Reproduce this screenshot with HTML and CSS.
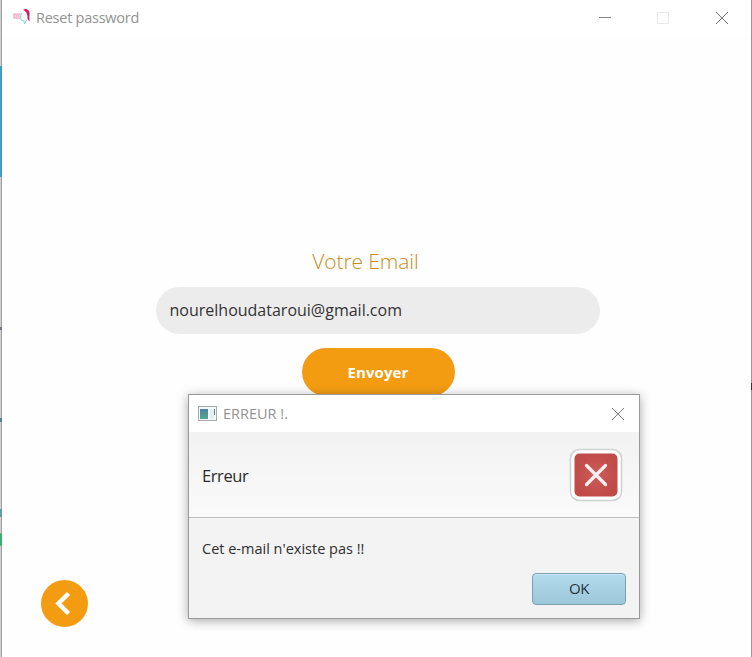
FILE: index.html
```html
<!DOCTYPE html>
<html lang="fr">
<head>
<meta charset="utf-8">
<title>Reset password</title>
<link rel="stylesheet" href="styles.css">
</head>
<body>
<div class="desktop">
  <main class="window">
    <header class="titlebar">
      <svg class="app-icon" width="20" height="20" viewBox="0 0 20 20" fill="none">
        <path d="M1 7.500h7.500M1 10.500h7.500" stroke="#f7bccb" stroke-width="2.500"/>
        <path d="M2 9h6" stroke="#ec92a9" stroke-width=".7" stroke-dasharray="1 1"/>
        <path d="M10 5c2-1.500 5 0 5 3s-1 5-3 7c-1-2-3-2-3-4s0-5 1-6z" fill="#f8fcfd"/>
        <path d="M9.500 6c-1 3-1 5-.5 7l3 1 .5 3 1.500-3c1-1 1.500-2 1.500-4" stroke="#8bcfe2" stroke-width="1"/>
        <path d="M11 3c2-2 6-1 6.500 2.500.2 3-.5 5 .2 9-1.500-1-2.200-3-2.200-5C15 6 14 4 11 3z" fill="#d2205c"/>
      </svg>
      <span class="title">Reset password</span>
      <svg class="controls" width="132" height="20" viewBox="0 0 132 20" fill="none">
        <path d="M1 9.500h12" stroke="#858585"/>
        <rect x="59.500" y="4.500" width="11" height="11" stroke="#e9e9e9"/>
        <path d="M118 4l12 12M130 4l-12 12" stroke="#777"/>
      </svg>
    </header>
    <section class="form">
      <label class="label" for="email">Votre Email</label>
      <div class="field" id="email"><span>nourelhoudataroui@gmail.com</span></div>
      <button class="send"><span>Envoyer</span></button>
    </section>
    <button class="back" aria-label="Retour">
      <svg width="47" height="47" viewBox="0 0 47 47"><path d="M27.500 13.500L17.500 23.500l10 10" fill="none" stroke="#fff" stroke-width="4.500"/></svg>
    </button>
  </main>
  <i class="edge cyan"></i><i class="edge mark-a"></i><i class="edge mark-b"></i><i class="edge mark-c"></i><i class="edge green"></i><i class="edge right-mark"></i>
  <section class="dialog">
    <header class="dialog-bar">
      <svg width="19" height="16" viewBox="0 0 19 16">
        <defs><linearGradient id="g" x2="0" y2="1"><stop stop-color="#4b82a6"/><stop offset="1" stop-color="#52a987"/></linearGradient></defs>
        <rect x=".5" y=".5" width="18" height="14" fill="#f5f8f8" stroke="#a2aaaa"/>
        <rect x="2" y="3" width="8" height="10" fill="url(#g)"/>
        <path d="M12 3h4v10h-4z" fill="#e5edee"/><path d="M16.500 3v6" stroke="#55828c"/>
      </svg>
      <span class="dialog-title">ERREUR !.</span>
      <svg class="close" width="14" height="14" viewBox="0 0 14 14"><path d="M1 1l12 12M13 1L1 13" stroke="#808080"/></svg>
    </header>
    <div class="dialog-head">
      <span class="heading">Erreur</span>
      <svg width="54" height="54" viewBox="0 0 54 54">
        <defs><radialGradient id="r"><stop stop-color="#ce5c5a"/><stop offset="1" stop-color="#c04b48"/></radialGradient></defs>
        <rect x="1.500" y="1.500" width="51" height="51" rx="9" fill="#fff" stroke="#cdd1d2" stroke-width="1.500"/>
        <rect x="5.500" y="5.500" width="43" height="43" rx="5" fill="url(#r)"/>
        <path d="M17.500 17.500l19 19M36.500 17.500l-19 19" stroke="#fbeeee" stroke-width="3.200" stroke-linecap="round"/>
      </svg>
    </div>
    <div class="dialog-body">
      <p>Cet e-mail n'existe pas !!</p>
      <button class="ok"><span>OK</span></button>
    </div>
  </section>
</div>
</body>
</html>
```
FILE: styles.css
```css
* { box-sizing: border-box; }
body { margin: 0; font-family: "Open Sans", "Noto Sans", sans-serif; }
button { border: 0; padding: 0; font-family: inherit; }
svg { display: block; flex: none; }
span, p { white-space: nowrap; }
.desktop { position: relative; width: 752px; height: 657px; overflow: hidden; background: #d0d0d0; padding-left: 1px; }
.window { width: 751px; height: 657px; background: #fefefe; border-left: 1px solid #a0a0a0; border-right: 1px solid #969696; display: flex; flex-direction: column; }
.titlebar { height: 35px; display: flex; align-items: center; padding: 0 21px 0 10px; background: #fff; flex: none; }
.title { font-size: 14.5px; letter-spacing: -.25px; color: #929292; margin-left: 4px; }
.controls { margin-left: auto; }
.app-icon { margin-top: -2px; }
.form { margin-top: 211px; height: 150px; display: flex; flex-direction: column; align-items: center; padding-left: 2px; flex: none; }
.label { font-size: 21px; font-weight: 300; line-height: 30px; color: #c98b20; letter-spacing: -.1px; margin-right: 24px; }
.field { width: 444px; height: 47px; margin-top: 11px; border-radius: 24px; background: #ececec; color: #333; font-size: 16px; display: flex; align-items: center; padding: 0 0 2px 14px; }
.send { width: 153px; height: 48px; margin: 14px 0 0 1px; border-radius: 24px; background: #f39c12; color: #fff; font-size: 15px; font-weight: 700; letter-spacing: .1px; }
.back { width: 47px; height: 47px; border-radius: 50%; background: #f39c12; margin: 184px 0 0 39px; flex: none; }
.edge { position: absolute; left: 0; width: 2px; }
.cyan { top: 66px; height: 111px; background: #459dbd; }
.mark-a { top: 327px; height: 3px; background: #6b7785; }
.mark-b { top: 418px; height: 4px; background: #627c91; }
.mark-c { top: 509px; height: 8px; background: #6b9d9f; }
.green { top: 533px; height: 13px; background: #35b26a; border-radius: 0 2px 2px 0; }
.right-mark { left: 751px; width: 1px; top: 383px; height: 7px; background: #333; }
.dialog { position: absolute; left: 188px; top: 394px; width: 452px; height: 225px; border: 1px solid #9a9a9a; background: #f3f3f3; box-shadow: 0 2px 10px rgba(0,0,0,.34); }
.dialog-bar { height: 37px; display: flex; align-items: center; padding: 0 14px 0 9px; background: #fff; }
.dialog-title { font-size: 14.5px; color: #929292; margin-left: 6px; }
.close { margin-left: auto; }
.dialog-head { height: 86px; display: flex; align-items: center; justify-content: space-between; padding: 0 16px 0 13px; background: linear-gradient(#f2f2f2, #fafafa); border-bottom: 1px solid #bdbdbd; }
.heading { font-size: 16.5px; letter-spacing: -.4px; color: #2b2b2b; padding-top: 1px; }
.dialog-body { height: 100px; display: flex; flex-direction: column; padding: 21px 13px 0; }
p { margin: 0; font-size: 14.5px; line-height: 20px; color: #2f2f2f; }
.ok { width: 94px; height: 32px; margin-top: 14px; padding-bottom: 2px; align-self: flex-end; border: 1px solid #7ba0b1; border-radius: 4px; background: linear-gradient(#b3dced, #9cc6d9); box-shadow: inset 0 1px #c7e6f2; font-size: 15px; letter-spacing: -.4px; color: #24343c; }
```
